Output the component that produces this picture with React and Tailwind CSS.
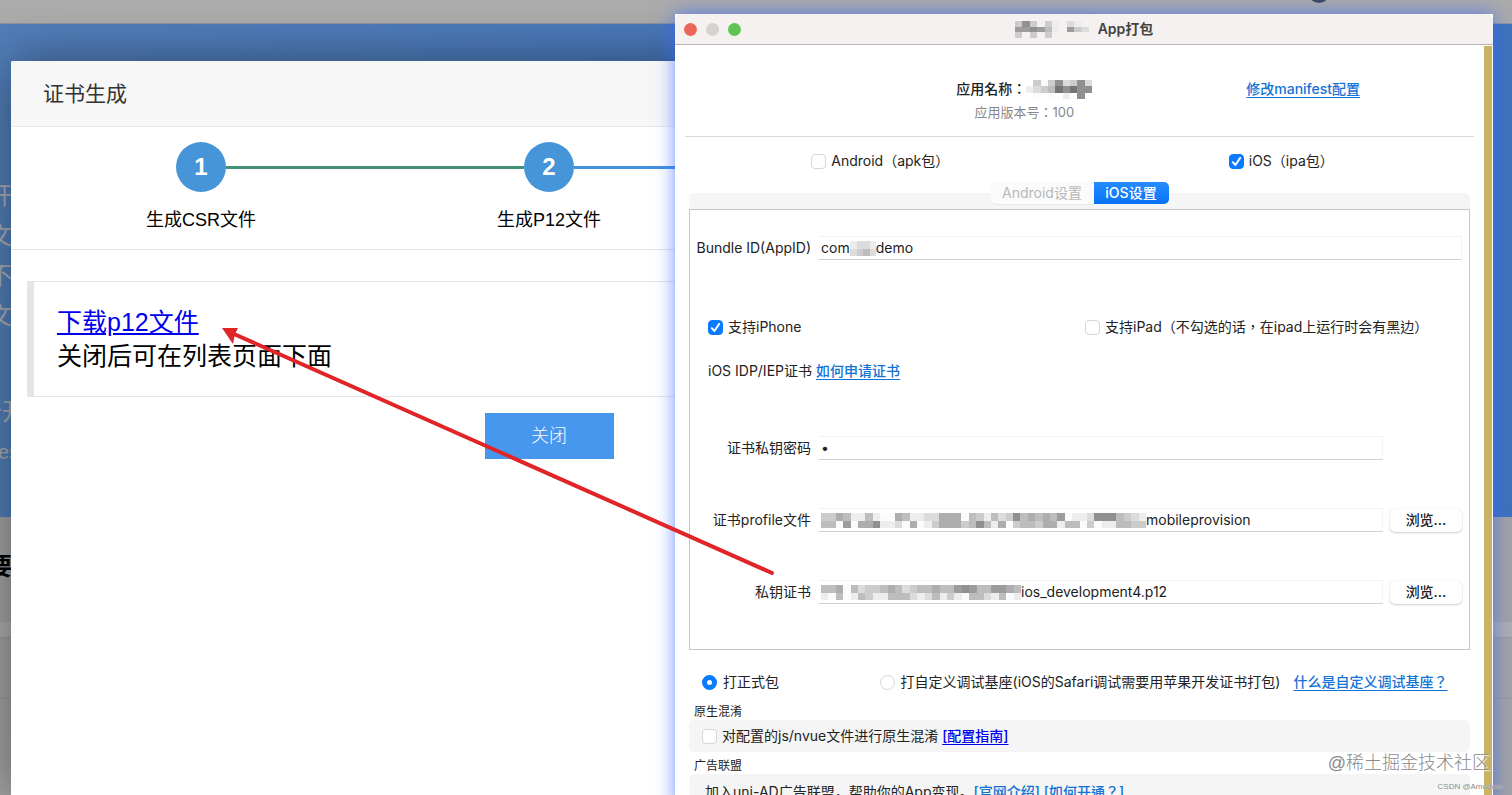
import { useState } from "react";

const SHADES = {
  "7": "#747474",
  "8": "#909090",
  "9": "#9c9c9c",
  a: "#adadad",
  b: "#bdbdbd",
  c: "#cccccc",
  d: "#dcdcdc",
  e: "#ededed",
  f: "#fbfbfb",
};

function Mosaic({ rows, width, height, className = "" }) {
  const cols = rows[0].length;
  return (
    <svg
      aria-hidden="true"
      width={width}
      height={height}
      viewBox={`0 0 ${cols} ${rows.length}`}
      preserveAspectRatio="none"
      shapeRendering="crispEdges"
      className={`shrink-0 ${className}`}
    >
      {rows.map((row, y) =>
        [...row].map((c, x) =>
          c === "." ? null : <rect key={`${x}-${y}`} x={x} y={y} width="1" height="1" fill={SHADES[c]} />
        )
      )}
    </svg>
  );
}

function Check({ id, label, defaultChecked = false, className = "" }) {
  return (
    <label htmlFor={id} className={`flex items-center gap-[5px] ${className}`}>
      <span className="grid shrink-0">
        <input
          id={id}
          type="checkbox"
          defaultChecked={defaultChecked}
          className="peer col-start-1 row-start-1 size-[15px] appearance-none rounded-[4px] border border-[#d6d6d6] bg-white checked:border-[#0a7bff] checked:bg-[#0a7bff]"
        />
        <svg
          viewBox="0 0 15 15"
          aria-hidden="true"
          className="pointer-events-none invisible col-start-1 row-start-1 size-[15px] peer-checked:visible"
        >
          <path d="M3.8 8.2 6.4 11 11.2 3.9" fill="none" stroke="#fff" strokeWidth="1.9" strokeLinecap="round" strokeLinejoin="round" />
        </svg>
      </span>
      <span className="whitespace-nowrap">{label}</span>
    </label>
  );
}

function Radio({ id, label, checked, onChange, className = "" }) {
  return (
    <label htmlFor={id} className={`flex items-center gap-[6px] ${className}`}>
      <input
        id={id}
        type="radio"
        name="package-kind"
        checked={checked}
        onChange={onChange}
        className="size-[15px] shrink-0 appearance-none rounded-full border border-[#d6d6d6] bg-white checked:border-[5px] checked:border-[#0a7bff]"
      />
      <span className="whitespace-nowrap">{label}</span>
    </label>
  );
}

function Field({ id, label, value, type = "text", mosaic, browse, className = "" }) {
  return (
    <div className={`flex items-center gap-[7px] ${className}`}>
      <label htmlFor={id} className="w-[115px] shrink-0 text-right whitespace-nowrap">
        {label}
      </label>
      <div className="flex h-6 min-w-0 flex-1 items-center border border-[#f3f3f3] border-b-[#d2d2d2] border-l-transparent bg-white pl-[2px]">
        {mosaic}
        <input id={id} type={type} defaultValue={value} className="min-w-0 flex-1 bg-transparent outline-none" />
      </div>
      {browse && (
        <button
          type="button"
          className="h-[23px] w-[72px] shrink-0 rounded-[5px] bg-white font-medium text-[#222] shadow-[0_0_1px_rgba(0,0,0,0.15),0_1px_2px_rgba(0,0,0,0.18)]"
        >
          浏览...
        </button>
      )}
      {!browse && type === "password" && <span className="w-[72px] shrink-0" />}
    </div>
  );
}

function Step({ number, title, left, right }) {
  return (
    <li className="flex flex-col items-center">
      <div className="flex w-full items-center">
        <span className={`h-[3px] flex-1 ${left}`} />
        <span className="flex size-[50px] items-center justify-center rounded-full bg-[#4595d8] text-2xl font-bold text-white">
          {number}
        </span>
        <span className={`h-[3px] flex-1 ${right}`} />
      </div>
      <span className="mt-[14px] text-lg leading-7 text-black">{title}</span>
    </li>
  );
}

function Backdrop() {
  return (
    <div className="absolute inset-0 flex flex-col overflow-hidden bg-[#a2a2a2]">
      <div className="flex h-6 shrink-0 justify-end border-b border-[#8d949d] bg-[#ababab] pr-[182px]">
        <span className="-mt-[19px] size-[22px] rounded-full bg-[#3c4a60]" />
      </div>
      <div className="h-[493px] shrink-0 bg-linear-to-r from-[#517eb8] to-[#4072ba] pt-[152px] text-2xl leading-10 whitespace-nowrap text-[#a9adb2]">
        <p className="-ml-3">开</p>
        <p className="-ml-3">文</p>
        <p className="-ml-3">不</p>
        <p className="-ml-3">文</p>
        <p className="mt-14 -ml-[22px]">升开</p>
        <p className="mt-[6px] -ml-[2px] text-xl">es</p>
      </div>
      <p className="-ml-3 h-[105px] shrink-0 pt-[30px] text-2xl leading-10 font-bold text-black">要</p>
      <div className="h-4 shrink-0 border-b border-[#979797] bg-[#adadad]" />
      <div className="h-[61px] shrink-0 border-b border-[#979797]" />
    </div>
  );
}

function CertificateDialog() {
  return (
    <section
      role="dialog"
      aria-labelledby="certificate-title"
      className="absolute top-[61px] bottom-0 left-[11px] w-full max-w-[1076px] rounded-t-[2px] bg-white shadow-[1px_1px_50px_rgba(0,0,0,0.45)]"
    >
      <header className="flex h-[66px] items-center rounded-t-[2px] border-b border-[#e8e8e8] bg-[#f7f7f7] px-8">
        <h1 id="certificate-title" className="text-[21px] text-[#333]">
          证书生成
        </h1>
      </header>
      <ol className="grid grid-cols-3 border-b border-[#e5e5e5] px-4 pt-[15px] pb-[15px]">
        <Step number="1" title="生成CSR文件" left="bg-transparent" right="bg-[#45927a]" />
        <Step number="2" title="生成P12文件" left="bg-[#45927a]" right="bg-[#4290dc]" />
        <li aria-hidden="true" className="flex h-[50px] items-center">
          <span className="h-[3px] w-1/2 bg-[#4290dc]" />
        </li>
      </ol>
      <div className="px-4 pt-[31px]">
        <div className="border border-l-[7px] border-[#e5e5e5] py-[23px] pl-[23px] text-[25px] leading-[34px] text-black">
          <p>
            <a href="#p12" className="text-[#0000ee] underline">
              下载p12文件
            </a>
          </p>
          <p>关闭后可在列表页面下面</p>
        </div>
        <div className="mt-4 flex justify-center">
          <button type="button" className="h-[46px] w-[129px] bg-[#4897ef] text-lg font-light text-white">
            关闭
          </button>
        </div>
      </div>
    </section>
  );
}

function PackageWindow() {
  const [kind, setKind] = useState("release");
  return (
    <section
      aria-labelledby="package-title"
      className="absolute top-[14px] right-[19px] left-[675px] bg-white font-[Inter,'Noto_Sans_CJK_TC',sans-serif] text-sm text-[#222] shadow-[0_0_18px_rgba(50,100,255,0.7)]"
    >
      <header className="grid h-[31px] grid-cols-[1fr_auto_1fr] items-center rounded-t-[6px] border-b border-[#b9b5b5] bg-[#f5f1f0] px-[9px]">
        <div className="flex gap-[9px]">
          <button type="button" aria-label="关闭窗口" className="size-[13px] rounded-full bg-[#ec6559]" />
          <button type="button" aria-label="最小化" className="size-[13px] rounded-full bg-[#d6d2d2]" />
          <button type="button" aria-label="全屏" className="size-[13px] rounded-full bg-[#60c454]" />
        </div>
        <div className="flex items-center gap-[9px]">
          <Mosaic width={74} height={17} rows={["c8c.ce.de.", "9989be.9cd", "c.c.c....."]} />
          <h2 id="package-title" className="font-semibold whitespace-nowrap text-[#444]">
            App打包
          </h2>
        </div>
      </header>

      <div className="flex pr-px">
        <div className="min-w-0 flex-1 px-[10px]">
          <div className="flex border-b border-[#d9d9d9] pt-8 pb-[13px] pl-[34%]">
            <div className="w-[142px] shrink-0 text-center">
              <p className="flex items-center justify-center leading-6 font-medium whitespace-nowrap">
                应用名称：
                <Mosaic width={66} height={19} rows={[".cfc8dc8d", "edcb78788", ".f.f.e.8."]} />
              </p>
              <p className="text-[13px] leading-[22px] text-[#888]">应用版本号：100</p>
            </div>
            <a href="#manifest" className="ml-[29%] leading-6 font-medium whitespace-nowrap text-[#1273d6] underline underline-offset-3">
              修改manifest配置
            </a>
          </div>

          <div className="flex pt-3 pl-[16%] leading-6">
            <Check id="android" label="Android（apk包）" className="w-[63%]" />
            <Check id="ios" label="iOS（ipa包）" defaultChecked />
          </div>

          <div className="px-1 pt-[9px]">
            <div className="grid">
              <div className="col-start-1 row-start-1 h-4 self-end rounded-t-[5px] bg-[#f5f5f5]" />
              <div role="tablist" className="col-start-1 row-start-1 flex justify-center pb-[5px] leading-[22px]">
                <button role="tab" aria-selected="false" type="button" className="w-[103px] rounded-l-[5px] bg-[#fbfbfb] text-[#b8b8b8] shadow-[0_1px_1px_rgba(0,0,0,0.06)]">
                  Android设置
                </button>
                <button role="tab" aria-selected="true" type="button" className="w-[75px] rounded-r-[5px] bg-linear-to-b from-[#258cff] to-[#0673f5] font-medium text-white">
                  iOS设置
                </button>
              </div>
            </div>

            <div role="tabpanel" className="border border-[#c6c6c6] pt-[26px] pr-[7px] pb-[45px] pl-[6px]">
              <div className="flex items-center gap-[7px]">
                <label htmlFor="bundle" className="w-[115px] shrink-0 text-right whitespace-nowrap">
                  Bundle ID(AppID)
                </label>
                <div className="flex h-6 min-w-0 flex-1 items-center border border-[#f3f3f3] border-b-[#d2d2d2] border-l-transparent pl-[2px]">
                  <span>com</span>
                  <Mosaic width={26} height={15} rows={["edde", "dcbd"]} />
                  <input id="bundle" defaultValue="demo" className="min-w-0 flex-1 bg-transparent outline-none" />
                </div>
              </div>

              <div className="mt-[55px] flex pl-3 leading-6">
                <Check id="iphone" label="支持iPhone" defaultChecked className="w-[50%]" />
                <Check id="ipad" label="支持iPad（不勾选的话，在ipad上运行时会有黑边）" />
              </div>

              <div className="mt-5 flex gap-1 pl-3 leading-6">
                <span>iOS IDP/IEP证书</span>
                <a href="#apply" className="font-medium text-[#1273d6] underline underline-offset-3">
                  如何申请证书
                </a>
              </div>

              <Field id="password" label="证书私钥密码" type="password" value="1" className="mt-[53px]" />
              <Field
                id="profile"
                label="证书profile文件"
                value="mobileprovision"
                browse
                className="mt-12"
                mosaic={
                  <Mosaic
                    width={325}
                    height={15}
                    rows={["ccabeebeffabeeddaaafbcebdc8babab9feed888bcde", "bbf9faa8eedfafecaaacb8beafcbbcaaebbfcfeebbcc"]}
                  />
                }
              />
              <Field
                id="p12"
                label="私钥证书"
                value="ios_development4.p12"
                browse
                className="mt-12"
                mosaic={<Mosaic width={200} height={15} rows={["bbafbdccbabdcbbabb989bb99ab", "efbfebceebbbdedbecefbbdebfe"]} />}
              />
            </div>
          </div>

          <div className="mt-5 flex pl-[17px] leading-6">
            <Radio id="release" label="打正式包" checked={kind === "release"} onChange={() => setKind("release")} className="w-[23%]" />
            <Radio
              id="custom"
              label="打自定义调试基座(iOS的Safari调试需要用苹果开发证书打包)"
              checked={kind === "custom"}
              onChange={() => setKind("custom")}
            />
            <a href="#custom-base" className="ml-[13px] font-medium whitespace-nowrap text-[#1273d6] underline underline-offset-3">
              什么是自定义调试基座？
            </a>
          </div>

          <h3 className="mt-[10px] pl-[9px] text-xs leading-4">原生混淆</h3>
          <div className="mx-1 flex h-8 items-center gap-1 rounded-[5px] bg-[#f5f5f5] px-[13px]">
            <Check id="obfuscate" label="对配置的js/nvue文件进行原生混淆" />
            <a href="#guide" className="font-medium text-[#0000ee] underline underline-offset-3">
              [配置指南]
            </a>
          </div>

          <h3 className="mt-[6px] pl-[9px] text-xs leading-4">广告联盟</h3>
          <div className="mx-1 flex rounded-[5px] bg-[#f5f5f5] px-4 py-[6px] leading-6 whitespace-nowrap">
            <span className="font-[Inter,'Noto_Sans_CJK_SC',sans-serif]">加入uni-AD广告联盟，帮助你的App变现。</span>
            <a href="#official" className="font-medium text-[#1273d6]">
              [官网介绍]
            </a>
            <a href="#enable" className="ml-1 font-medium text-[#1273d6]">
              [如何开通？]
            </a>
          </div>
        </div>
        <div className="mt-px w-2 shrink-0 bg-[#c9b466]" />
      </div>
    </section>
  );
}

export default function App() {
  return (
    <main className="relative h-screen overflow-hidden font-['Liberation_Sans','Noto_Sans_CJK_SC',sans-serif]">
      <Backdrop />
      <CertificateDialog />
      <PackageWindow />
      <svg aria-hidden="true" width="560" height="252" viewBox="0 0 560 252" className="pointer-events-none absolute top-[325px] left-[218px]">
        <path d="M554 248 16 9" stroke="#e02428" strokeWidth="4" strokeLinecap="round" />
        <path d="M4 3 20 3 17 9 15 19Z" fill="#e02428" />
      </svg>
      <div className="pointer-events-none absolute right-[9px] bottom-[2px] text-right text-[#8a8a8a]">
        <p className="mr-[13px] text-lg leading-7 font-light [text-shadow:1px_1px_1px_#fff]">@稀土掘金技术社区</p>
        <p className="mt-1 text-[8px] leading-3 [text-shadow:0_0_1px_#fff]">CSDN @Amodoro</p>
      </div>
    </main>
  );
}
